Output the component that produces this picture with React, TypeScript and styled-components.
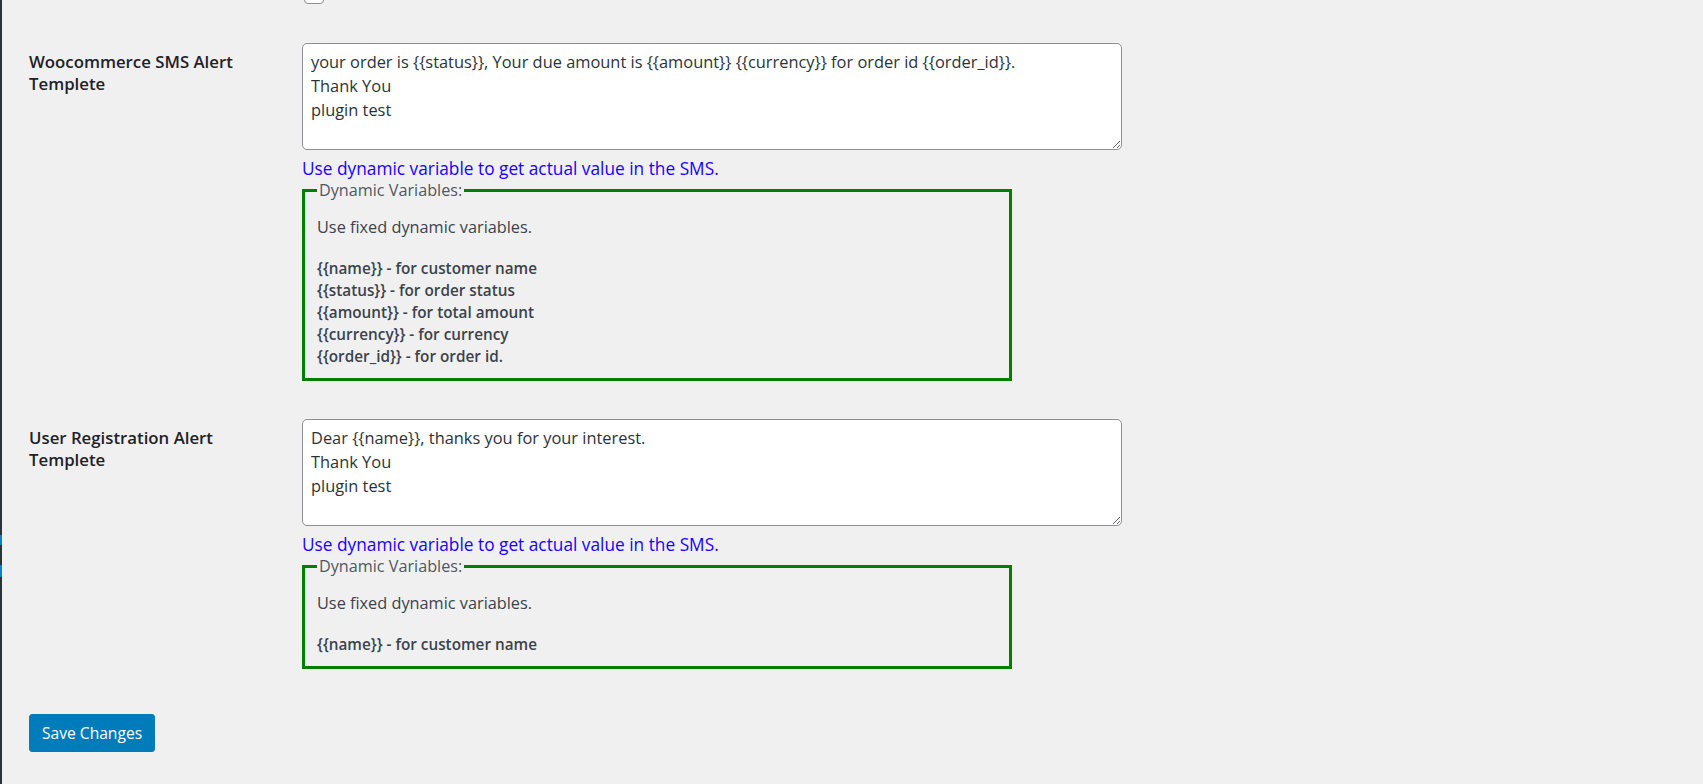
import styled, { createGlobalStyle } from "styled-components";

const GlobalStyle = createGlobalStyle`
  html, body {
    margin: 0;
    padding: 0;
    background: #f0f0f1;
  }
  body {
    font-family: "Open Sans", "Liberation Sans", sans-serif;
    color: #2c3338;
  }
`;

const Page = styled.div`
  display: flex;
  min-height: 784px;
  overflow: hidden;
`;

// thin slice of the admin menu that peeks in on the left
const MenuEdge = styled.div`
  width: 2px;
  flex-shrink: 0;
  display: flex;
  flex-direction: column;
`;

const EdgePiece = styled.div<{ $h?: number; $active?: boolean }>`
  height: ${(p) => (p.$h ? `${p.$h}px` : "auto")};
  flex: ${(p) => (p.$h ? "none" : "1")};
  background: ${(p) => (p.$active ? "#0a84c4" : "#2c3338")};
`;

const Main = styled.main`
  flex: 1;
  padding-left: 27px;
  display: flex;
  flex-direction: column;
`;

const StubRow = styled.div`
  display: grid;
  grid-template-columns: 273px 1fr;
  margin-top: -16px;
`;

const Checkbox = styled.span`
  display: block;
  width: 18px;
  height: 18px;
  margin-left: 2px;
  border: 1px solid #8c8f94;
  border-radius: 4px;
  background: #fff;
`;

const FormTable = styled.div`
  display: grid;
  grid-template-columns: 273px 820px;
  row-gap: 38px;
  margin-top: 39px;
`;

const Label = styled.div`
  padding-top: 8px;
  width: 240px;
  font-size: 16.8px;
  line-height: 21.8px;
  font-weight: 600;
  color: #1d2327;
`;

const Field = styled.div`
  display: flex;
  flex-direction: column;
  align-items: flex-start;
`;

const TextArea = styled.textarea`
  box-sizing: border-box;
  width: 820px;
  height: 107px;
  margin: 0;
  padding: 6px 8px;
  border: 1px solid #8c8f94;
  border-radius: 5px;
  background: #fff;
  color: #2c3338;
  font-family: inherit;
  font-size: 16.4px;
  line-height: 24px;
  resize: both;
  outline: none;
`;

const Help = styled.p`
  margin: 9px 0 0;
  font-size: 17.3px;
  line-height: 20px;
  color: #1a00ff;
`;

const VarBox = styled.fieldset`
  box-sizing: border-box;
  width: 710px;
  margin: 1px 0 0;
  padding: 0 12px 11px;
  border: 3px solid #008000;
  min-inline-size: 0;
`;

const Legend = styled.legend`
  padding: 0 2px;
  font-size: 16.2px;
  line-height: 20px;
  color: #50575e;
`;

const Intro = styled.p`
  margin: 16px 0 0;
  font-size: 16.3px;
  line-height: 22px;
  color: #3c434a;
`;

const VarList = styled.div`
  margin-top: 19px;
  font-size: 15.3px;
  line-height: 22px;
  font-weight: 600;
  color: #3c434a;
`;

const SaveButton = styled.button`
  align-self: flex-start;
  margin-top: 45px;
  height: 38px;
  padding: 0 12px;
  border: 1px solid #007cba;
  border-radius: 3px;
  background: #007cba;
  color: #fff;
  font-family: inherit;
  font-size: 15.6px;
  cursor: pointer;
`;

interface TemplateRowProps {
  label: string;
  text: string;
  vars: string[];
}

const TemplateRow = ({ label, text, vars }: TemplateRowProps) => (
  <>
    <Label>{label}</Label>
    <Field>
      <TextArea defaultValue={text} />
      <Help>Use dynamic variable to get actual value in the SMS.</Help>
      <VarBox>
        <Legend>Dynamic Variables:</Legend>
        <Intro>Use fixed dynamic variables.</Intro>
        <VarList>
          {vars.map((v) => (
            <div key={v}>{v}</div>
          ))}
        </VarList>
      </VarBox>
    </Field>
  </>
);

const rows: TemplateRowProps[] = [
  {
    label: "Woocommerce SMS Alert Templete",
    text:
      "your order is {{status}}, Your due amount is {{amount}} {{currency}} for order id {{order_id}}.\nThank You\nplugin test",
    vars: [
      "{{name}} - for customer name",
      "{{status}} - for order status",
      "{{amount}} - for total amount",
      "{{currency}} - for currency",
      "{{order_id}} - for order id.",
    ],
  },
  {
    label: "User Registration Alert Templete",
    text: "Dear {{name}}, thanks you for your interest.\nThank You\nplugin test",
    vars: ["{{name}} - for customer name"],
  },
];

export default function App() {
  return (
    <>
      <GlobalStyle />
      <Page>
        <MenuEdge>
          <EdgePiece $h={535} />
          <EdgePiece $h={10} $active />
          <EdgePiece $h={20} />
          <EdgePiece $h={12} $active />
          <EdgePiece />
        </MenuEdge>
        <Main>
          <StubRow>
            <span />
            <Checkbox />
          </StubRow>
          <FormTable>
            {rows.map((r) => (
              <TemplateRow key={r.label} {...r} />
            ))}
          </FormTable>
          <SaveButton>Save Changes</SaveButton>
        </Main>
      </Page>
    </>
  );
}
